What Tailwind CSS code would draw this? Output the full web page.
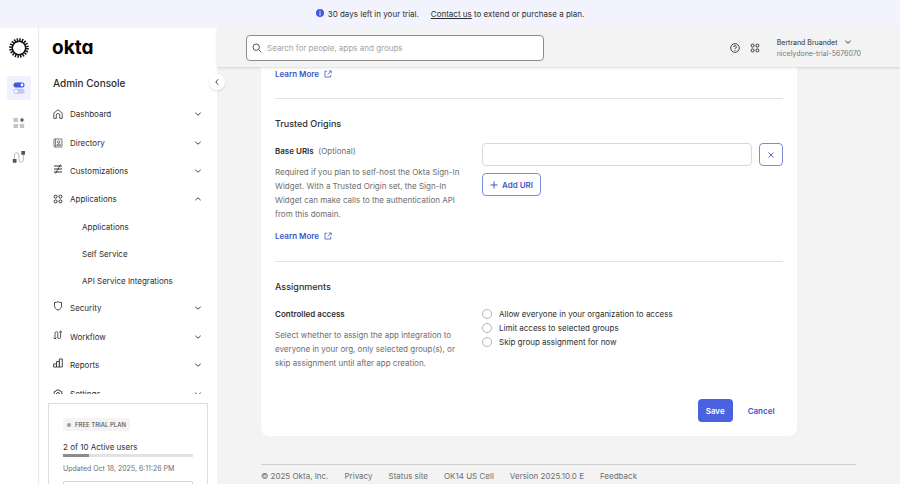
<!DOCTYPE html>
<html lang="en">

<head>
    <meta charset="UTF-8">
    <meta name="viewport" content="width=device-width, initial-scale=1.0">
    <title>Okta Admin Console</title>
    <script src="https://cdn.jsdelivr.net/npm/@tailwindcss/browser@4"></script>
</head>

<body class="h-screen flex flex-col overflow-hidden bg-[#f3f3f3] font-[Inter,sans-serif] text-[8px] leading-[14px] text-[#2e2e2e]">
    <!-- Icons used more than once -->
    <svg class="hidden">
        <symbol id="chevron" viewBox="0 0 8 8" fill="none" stroke="currentColor" stroke-width="0.9">
            <path d="M1.3 2.8 4 5.2l2.7-2.4" />
        </symbol>
        <symbol id="external" viewBox="0 0 10 10" fill="none" stroke="currentColor">
            <path d="M4 1.5H1.2v7.3h7.3V6M6 1.2h3v3M8.9 1.3 4.6 5.6" />
        </symbol>
        <symbol id="apps" viewBox="0 0 10 10" fill="none" stroke="currentColor">
            <circle cx="2.6" cy="2.6" r="1.5" />
            <circle cx="7.4" cy="2.6" r="1.5" />
            <circle cx="2.6" cy="7.4" r="1.5" />
            <circle cx="7.4" cy="7.4" r="1.5" />
        </symbol>
    </svg>

    <div class="h-7 shrink-0 flex items-center justify-center bg-[#f2f3fd]">
        <svg class="size-2 mr-1 -mt-0.5" viewBox="0 0 8 8">
            <circle cx="4" cy="4" r="4" fill="#3f59e4" />
            <path d="M4 1.6v1M4 3.4v3" stroke="#fff" />
        </svg>
        <span class="mr-3">30 days left in your trial.</span>
        <span><a href="#" class="underline">Contact us</a> to extend or purchase a plan.</span>
    </div>

    <div class="flex-1 min-h-0 flex">
        <!-- Product rail -->
        <div class="w-[39px] shrink-0 flex flex-col items-center border-r border-[#e8e8e8] bg-white pt-[10px]">
            <svg class="size-5" viewBox="0 0 20 20" fill="none" stroke="#111">
                <circle cx="10" cy="10" r="7.9" stroke-width="3.8" stroke-dasharray="1.4 1.082" />
                <circle cx="10" cy="10" r="6.7" stroke-width="1.4" />
            </svg>
            <button class="mt-[18px] size-6 flex items-center justify-center rounded-xs bg-[#eff1fd]" aria-label="Admin console">
                <svg class="size-3" viewBox="0 0 12 12">
                    <rect x="0.5" y="0.5" width="11" height="5" rx="2.5" fill="#3f59e4" />
                    <circle cx="9" cy="3" r="1.4" fill="#fff" />
                    <rect x="0.5" y="6.8" width="11" height="5" rx="2.5" fill="#bfc8f7" />
                    <circle cx="3" cy="9.3" r="1.4" fill="#fff" />
                </svg>
            </button>
            <button class="mt-[17px]" aria-label="Add app">
                <svg class="size-3" viewBox="0 0 12 12">
                    <path d="M.5 1h4.5v4H.5zM.5 7h4.5v4H.5zM6.7 7h4.5v4H6.7z" fill="#c4c4c4" />
                    <path d="M9 .8v4.4M6.8 3h4.4" stroke="#333" />
                </svg>
            </button>
            <button class="mt-[21px]" aria-label="Workflows">
                <svg class="size-3.5" viewBox="0 0 14 14" fill="none">
                    <path d="M2.5 10V5a2.200 2.200 0 0 1 4.400 0v5a2.200 2.200 0 0 0 4.400 0V4" stroke="#bbb" />
                    <path d="M.8 9h3.700v3.700H.8zM9.300 1H13v3.700H9.300z" fill="#555" />
                </svg>
            </button>
        </div>

        <!-- Sidebar -->
        <aside class="relative w-[178px] shrink-0 flex flex-col bg-white">
            <div class="pl-[13px] pt-[9px] text-[19px] leading-[22px] font-bold text-black [font-feature-settings:'cv11']">okta</div>
            <h1 class="pl-[14px] mt-4 text-[10px] leading-4 font-medium">Admin Console</h1>
            <button class="absolute -right-2 top-[46px] z-20 size-4 flex items-center justify-center rounded-full bg-white shadow" aria-label="Collapse menu">
                <svg class="size-2 rotate-90"><use href="#chevron" /></svg>
            </button>

            <nav class="mt-[9px] flex-1 min-h-0 overflow-hidden pl-[14px] pr-[15px]">
                <a href="#" class="h-7 flex items-center gap-[7px]">
                    <svg class="size-2.5" viewBox="0 0 10 10" fill="none" stroke="#444" stroke-width="0.9">
                        <path d="M.8 4.2 5 .7l4.200 3.500v5.200H6.700V6.200a1.700 1.700 0 0 0-3.400 0v3.200H.8z" />
                    </svg>
                    <span class="flex-1">Dashboard</span>
                    <svg class="size-2"><use href="#chevron" /></svg>
                </a>
                <a href="#" class="h-[29px] flex items-center gap-[7px]">
                    <svg class="size-2.5" viewBox="0 0 10 10" fill="none" stroke="#555" stroke-width="0.8">
                        <rect x="1" y="1" width="8" height="8" rx="0.5" />
                        <path d="M2.600 1v8" />
                        <circle cx="5.700" cy="4" r="1.200" />
                        <path d="M3.700 7.300c.5-1.800 3.500-1.800 4 0z" />
                    </svg>
                    <span class="flex-1">Directory</span>
                    <svg class="size-2"><use href="#chevron" /></svg>
                </a>
                <a href="#" class="h-7 flex items-center gap-[7px]">
                    <svg class="size-2.5 -mt-1" viewBox="0 0 10 10" fill="none" stroke="#333">
                        <path d="M1 2h8M1 5h8M1 8h8M7.500.6 5.800 3.400M6 3.600 4.200 6.400M4.200 6.600 2.600 9.400" />
                    </svg>
                    <span class="flex-1">Customizations</span>
                    <svg class="size-2"><use href="#chevron" /></svg>
                </a>
                <a href="#" class="h-7 flex items-center gap-[7px]">
                    <svg class="size-2.5"><use href="#apps" /></svg>
                    <span class="flex-1">Applications</span>
                    <svg class="size-2 rotate-180"><use href="#chevron" /></svg>
                </a>
                <div class="pl-[29px]">
                    <a href="#" class="h-[27px] flex items-center">Applications</a>
                    <a href="#" class="h-[27px] flex items-center">Self Service</a>
                    <a href="#" class="h-[27px] flex items-center">API Service Integrations</a>
                </div>
                <a href="#" class="h-7 flex items-center gap-[7px]">
                    <svg class="size-2.5 -mt-1" viewBox="0 0 10 10" fill="none" stroke="#444">
                        <path d="M1.500 1.500Q3.500 1.500 5 .8q1.500.7 3.500.7v3.300C8.500 7 7 8.300 5 9.200 3 8.300 1.500 7 1.500 4.800z" />
                    </svg>
                    <span class="flex-1">Security</span>
                    <svg class="size-2"><use href="#chevron" /></svg>
                </a>
                <a href="#" class="h-[29px] flex items-center gap-[7px]">
                    <svg class="size-2.5 -mt-1" viewBox="0 0 10 10" fill="none" stroke="#444" stroke-width="0.9">
                        <path d="M2 9V3.200a1.400 1.400 0 0 1 2.800 0v4a1.400 1.400 0 0 0 2.800 0V1M.6 7.600 2 9l1.400-1.400M6.200 2.400 7.600 1 9 2.400" />
                    </svg>
                    <span class="flex-1">Workflow</span>
                    <svg class="size-2"><use href="#chevron" /></svg>
                </a>
                <a href="#" class="h-7 flex items-center gap-[7px]">
                    <svg class="size-2.5 -mt-1" viewBox="0 0 10 10" fill="none" stroke="#444">
                        <path d="M.6 9V6h2.900v3zM3.500 9V3.500h2.900V9zM6.400 9V1h2.900v8z" />
                    </svg>
                    <span class="flex-1">Reports</span>
                    <svg class="size-2"><use href="#chevron" /></svg>
                </a>
                <a href="#" class="h-[29px] flex items-center gap-[7px]">
                    <svg class="size-2.5" viewBox="0 0 10 10" fill="none" stroke="#444">
                        <path d="M3.500 1h3l.6 1.200 1.700.5v4.600l-1.700.5L6.500 9h-3l-.6-1.200-1.700-.5V2.700l1.700-.5z" />
                        <circle cx="5" cy="5" r="1.500" />
                    </svg>
                    <span class="flex-1">Settings</span>
                    <svg class="size-2"><use href="#chevron" /></svg>
                </a>
            </nav>

            <div class="h-[90px] shrink-0 overflow-hidden px-[9px] pt-[9px]">
                <div class="border border-[#dedede] px-[14px] pt-[14px] pb-4">
                    <div class="flex">
                        <span class="flex h-[13px] items-center gap-1 rounded-xs bg-[#f4f4f4] px-1 text-[6px] font-medium text-[#555]">
                            <span class="size-1 rounded-full bg-[#999]"></span>
                            FREE TRIAL PLAN
                        </span>
                    </div>
                    <p id="usage" class="mt-[9px]">2 of 10 Active users</p>
                    <div class="h-[3px] bg-[#e1e1e1]" role="progressbar" aria-labelledby="usage" aria-valuenow="2" aria-valuemax="10">
                        <div class="h-full bg-[#8c8c8c]" style="width: 20%"></div>
                    </div>
                    <p class="mt-[5px] text-[7px] text-[#6e6e6e]">Updated Oct 18, 2025, 6:11:26 PM</p>
                    <button class="mt-[5px] h-6 w-full rounded-xs border border-[#d2d2d2]" aria-label="View plan"></button>
                </div>
            </div>
        </aside>

        <!-- Main column -->
        <div class="flex-1 min-w-0 flex flex-col">
            <header class="relative z-10 h-[39px] shrink-0 flex items-center pl-[29px] pr-[39px] bg-[#f3f3f3] shadow">
                <label class="w-[298px] h-[26px] flex items-center gap-[5px] rounded-sm border border-[#8c8c8c] bg-white px-[5px]">
                    <svg class="size-2.5" viewBox="0 0 10 10" fill="none" stroke="#555">
                        <circle cx="4.200" cy="4.200" r="3.200" />
                        <path d="m6.500 6.500 2.800 2.800" />
                    </svg>
                    <input type="search" placeholder="Search for people, apps and groups" aria-label="Search" class="flex-1 min-w-0 outline-none placeholder:text-[#a3a3a3]">
                </label>
                <button class="ml-auto" aria-label="Help">
                    <svg class="size-2.5" viewBox="0 0 10 10" fill="none" stroke="currentColor" stroke-width="0.9">
                        <circle cx="5" cy="5" r="4.300" />
                        <path d="M3.700 4a1.300 1.300 0 1 1 1.900 1.100c-.4.2-.6.4-.6.900M5 6.700v.9" />
                    </svg>
                </button>
                <button class="ml-[10px]" aria-label="Apps">
                    <svg class="size-2.5"><use href="#apps" /></svg>
                </button>
                <button class="ml-[17px] text-left text-[7px] leading-[11px]">
                    <span class="flex items-center gap-[7px]">
                        Bertrand Bruandet
                        <svg class="size-2"><use href="#chevron" /></svg>
                    </span>
                    <span class="block text-[#777]">nicelydone-trial-5676070</span>
                </button>
            </header>

            <main class="flex-1 min-h-0 overflow-hidden px-11">
                <form class="w-9/10 rounded-b-lg bg-white px-[14px] pb-[14px]">
                    <a href="#" class="flex items-center gap-[5px] font-semibold text-[#4257c9]">
                        Learn More
                        <svg class="size-2"><use href="#external" /></svg>
                    </a>

                    <section class="mt-[17px] border-t border-[#e1e1e1] pt-[18px]">
                        <h2 class="text-[9px] leading-[14px] font-medium">Trusted Origins</h2>
                        <div class="mt-3 flex">
                            <div class="w-[207px] shrink-0 pr-2 pt-px">
                                <label for="base-uri"><b class="font-semibold">Base URIs</b> <span class="text-[#6e6e6e]">&nbsp;(Optional)</span></label>
                                <p class="mt-[7px] text-[#6e6e6e]">Required if you plan to self-host the Okta Sign-In Widget. With a Trusted Origin set, the Sign-In Widget can make calls to the authentication API from this domain.</p>
                                <a href="#" class="mt-2 flex items-center gap-[5px] font-semibold text-[#4257c9]">
                                    Learn More
                                    <svg class="size-2"><use href="#external" /></svg>
                                </a>
                            </div>
                            <div class="flex-1 min-w-0">
                                <div class="flex gap-[7px]">
                                    <input id="base-uri" type="text" class="flex-1 min-w-0 h-[23px] rounded-sm border border-[#d9d9d9] px-2">
                                    <button type="button" class="w-6 h-[23px] flex items-center justify-center rounded-sm border border-[#7b8bdb] text-[#4257c9]" aria-label="Remove URI">
                                        <svg class="size-2" viewBox="0 0 8 8" stroke="currentColor" stroke-width="0.9"><path d="m1.500 1.500 5 5m0-5-5 5" /></svg>
                                    </button>
                                </div>
                                <button type="button" class="mt-[7px] h-[23px] flex items-center gap-1 rounded-sm border border-[#7b8bdb] px-[7px] font-semibold text-[#4257c9]">
                                    <svg class="size-2" viewBox="0 0 8 8" stroke="currentColor"><path d="M4 .5v7M.5 4h7" /></svg>
                                    Add URI
                                </button>
                            </div>
                        </div>
                    </section>

                    <section class="mt-[18px] border-t border-[#e1e1e1] pt-[18px]">
                        <h2 class="text-[9px] leading-[14px] font-medium">Assignments</h2>
                        <div class="mt-[13px] flex">
                            <div class="w-[207px] shrink-0 pr-4">
                                <h3 id="access" class="font-semibold">Controlled access</h3>
                                <p class="mt-[7px] text-[#6e6e6e]">Select whether to assign the app integration to everyone in your org, only selected group(s), or skip assignment until after app creation.</p>
                            </div>
                            <div role="radiogroup" aria-labelledby="access">
                                <label class="flex items-center gap-[7px]">
                                    <input type="radio" name="access" class="appearance-none size-[10px] rounded-full border border-[#b5b5b5] checked:border-4 checked:border-[#4257c9]">
                                    Allow everyone in your organization to access
                                </label>
                                <label class="flex items-center gap-[7px]">
                                    <input type="radio" name="access" class="appearance-none size-[10px] rounded-full border border-[#b5b5b5] checked:border-4 checked:border-[#4257c9]">
                                    Limit access to selected groups
                                </label>
                                <label class="flex items-center gap-[7px]">
                                    <input type="radio" name="access" class="appearance-none size-[10px] rounded-full border border-[#b5b5b5] checked:border-4 checked:border-[#4257c9]">
                                    Skip group assignment for now
                                </label>
                            </div>
                        </div>
                    </section>

                    <div class="mt-[29px] flex justify-end">
                        <button class="h-[23px] rounded-sm bg-[#4a62e0] px-2 font-semibold text-white">Save</button>
                        <button type="button" class="ml-[7px] h-[23px] px-2 font-semibold text-[#4257c9]">Cancel</button>
                    </div>
                </form>

                <footer class="mt-7 flex gap-4 border-t border-[#cfcfcf] pt-1 text-[#6e6e6e]">
                    <span>© 2025 Okta, Inc.</span>
                    <a href="#">Privacy</a>
                    <a href="#">Status site</a>
                    <span>OK14 US Cell</span>
                    <span>Version 2025.10.0 E</span>
                    <a href="#">Feedback</a>
                </footer>
            </main>
        </div>
    </div>
</body>

</html>
